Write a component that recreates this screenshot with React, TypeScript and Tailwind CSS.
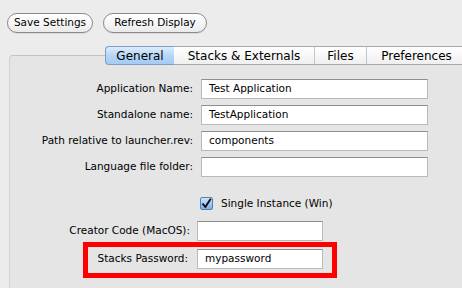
import React from 'react';

const font = { fontFamily: '"DejaVu Sans", "Noto Sans", sans-serif' };

const Field: React.FC<{ value?: string; className?: string }> = ({ value = '', className = '' }) => (
  <div
    className={`h-[20px] bg-white border border-[#b9b9b9] border-t-[#8f8f8f] flex items-center pl-[7px] text-[10.5px] text-black ${className}`}
  >
    {value}
  </div>
);

const Pill: React.FC<{ label: string; width: string }> = ({ label, width }) => (
  <button
    className={`${width} h-[20px] rounded-full border border-[#8a8a8a] bg-gradient-to-b from-white via-[#f7f7f7] to-[#e9e9e9] text-[10.5px] text-black flex items-center justify-center shadow-[0_1px_0_rgba(0,0,0,0.08)]`}
  >
    {label}
  </button>
);

const tabs = [
  { label: 'General', w: 'w-[69px]', active: true },
  { label: 'Stacks & Externals', w: 'w-[140px]', active: false },
  { label: 'Files', w: 'w-[52px]', active: false },
  { label: 'Preferences', w: 'w-[100px]', active: false },
];

export default function App() {
  return (
    <div className="w-[462px] h-[288px] overflow-hidden bg-[#ececec] flex flex-col" style={font}>
      <div className="flex gap-[10px] pt-[13px] pl-[7px]">
        <Pill label="Save Settings" width="w-[86px]" />
        <Pill label="Refresh Display" width="w-[104px]" />
      </div>

      <div className="relative z-10 flex mt-[13px] ml-[105px] h-[19px] shrink-0">
        {tabs.map((t, i) => (
          <div
            key={t.label}
            className={`${t.w} shrink-0 h-full flex items-center justify-center text-[12px] text-black border-y ${
              t.active
                ? 'rounded-l-[4px] border-l border-[#7f9ec4] bg-gradient-to-b from-[#dcecfd] via-[#b6d6f7] to-[#a3cbf4]'
                : 'border-[#a8a8a8] bg-gradient-to-b from-white to-[#efefef]'
            } ${i > 1 ? 'border-l border-l-[#c4c4c4]' : ''}`}
          >
            {t.label}
          </div>
        ))}
      </div>

      <div className="-mt-[10px] ml-[9px] flex-1 bg-[#e5e5e5] border-t border-l border-[#c3c3c3] border-l-[#d2d2d2] rounded-tl-[4px] pt-[23px] flex flex-col">
        <div className="grid grid-cols-[183px_227px] gap-x-[8px] gap-y-[6px] items-center text-[10.5px] text-black">
          <span className="text-right">Application Name:</span>
          <Field value="Test Application" />
          <span className="text-right">Standalone name:</span>
          <Field value="TestApplication" />
          <span className="text-right">Path relative to launcher.rev:</span>
          <Field value="components" />
          <span className="text-right">Language file folder:</span>
          <Field />
        </div>

        <div className="flex items-center gap-[8px] pl-[190px] mt-[20px] h-[13px] text-[10.5px] text-black">
          <div className="w-[13px] h-[13px] rounded-[2px] border border-[#5a7eaa] bg-gradient-to-b from-[#cfe4fb] to-[#78b0ea] flex items-center justify-center">
            <svg width="11" height="11" viewBox="0 0 11 11">
              <path d="M1.5 5.5 L4.3 9 L9.8 0.8" fill="none" stroke="#111" strokeWidth="2" strokeLinejoin="round" />
            </svg>
          </div>
          <span>Single Instance (Win)</span>
        </div>

        <div className="grid grid-cols-[180px_126px] gap-x-[7px] items-center mt-[11px] text-[10.5px] text-black">
          <span className="text-right">Creator Code (MacOS):</span>
          <Field />
        </div>

        <div className="relative w-[313px] mt-[8px]">
          <div className="grid grid-cols-[178px_126px] gap-x-[9px] items-center text-[10.5px] text-black">
            <span className="text-right">Stacks Password:</span>
            <Field value="mypassword" />
          </div>
          <div className="absolute left-[73px] -right-[14px] -top-[7px] -bottom-[9px] border-[5px] border-[#ff0000]" />
        </div>
      </div>
    </div>
  );
}
